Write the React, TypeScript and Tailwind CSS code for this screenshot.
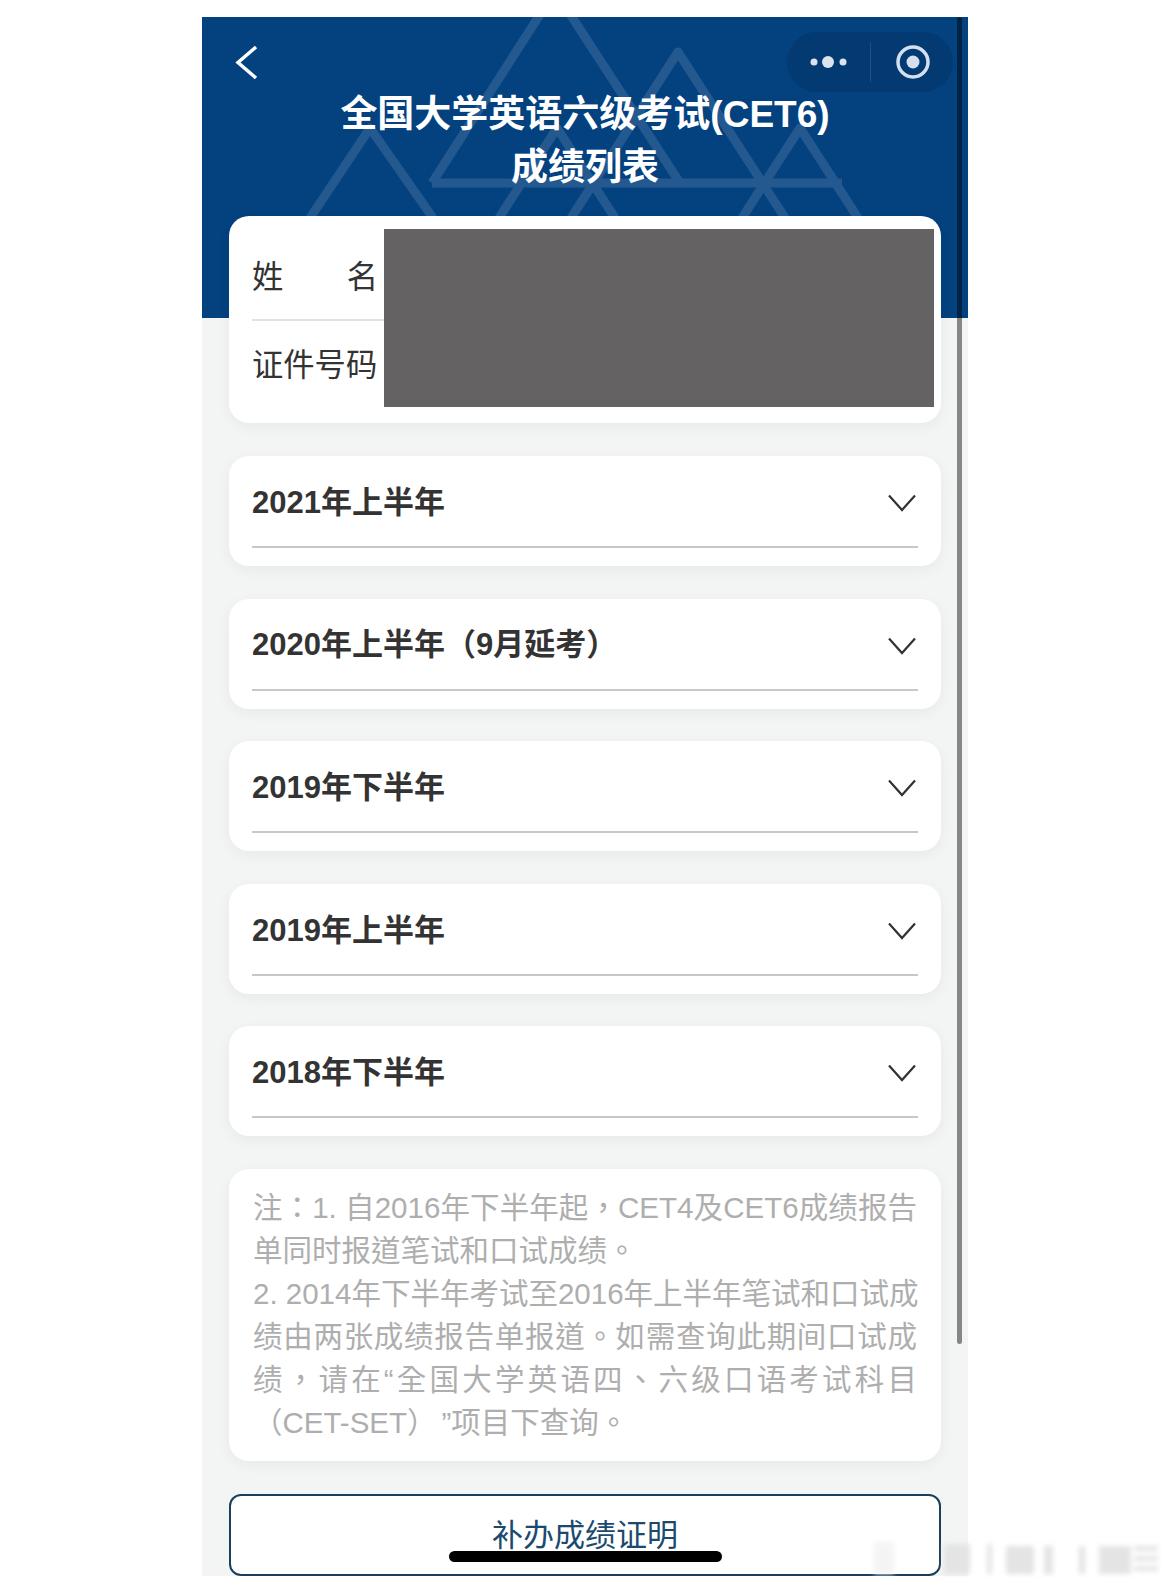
const cjk = "font-['Liberation_Sans','Noto_Sans_CJK_SC',sans-serif]";

const terms = [
  "2021年上半年",
  "2020年上半年（9月延考）",
  "2019年下半年",
  "2019年上半年",
  "2018年下半年",
];

const noteLines = [
  { text: "注：1. 自2016年下半年起，CET4及CET6成绩报告", fill: true },
  { text: "单同时报道笔试和口试成绩。", fill: false },
  { text: "2. 2014年下半年考试至2016年上半年笔试和口试成", fill: true },
  { text: "绩由两张成绩报告单报道。如需查询此期间口试成", fill: true },
  { text: "绩，请在“全国大学英语四、六级口语考试科目", fill: true },
  { text: "（CET-SET）\u2006”项目下查询。", fill: false },
];

const Triangles = () => (
  <svg className="absolute left-0 top-0 opacity-[0.125]" width="766" height="301" fill="none" stroke="#ffffff" strokeWidth="9" strokeLinejoin="round">
    <path d="M230 166 L353 -26 L478 166" />
    <path d="M230 166 H640" />
    <path d="M369 201 L476 35 L583 201" />
    <path d="M540 201 L598 111 L656 201" />
    <path d="M297 201 L355 111 L413 201" />
    <path d="M108 201 L168 111 L231 201" />
  </svg>
);

const Chevron = () => (
  <svg width="30" height="18" viewBox="0 0 30 18" fill="none" stroke="#333333" strokeWidth="2.2">
    <path d="M2 1.5 L15 16 L28 1.5" />
  </svg>
);

// blurred site stamp in the bottom right corner of the photo
const CornerStamp = () => (
  <svg className="absolute left-[860px] top-[1510px]" width="310" height="78" fill="#e4e4e4">
    <defs>
      <filter id="soft">
        <feGaussianBlur stdDeviation="2.5" />
      </filter>
    </defs>
    <g filter="url(#soft)">
      <rect x="14" y="32" width="20" height="32" fill="#f4f4f4" />
      <rect x="84" y="34" width="26" height="30" />
      <rect x="127" y="34" width="5" height="30" />
      <rect x="146" y="36" width="28" height="28" />
      <rect x="184" y="36" width="9" height="28" />
      <rect x="219" y="36" width="6" height="28" />
      <rect x="239" y="36" width="32" height="28" />
      <rect x="274" y="36" width="24" height="5" />
      <rect x="274" y="46" width="24" height="5" />
      <rect x="274" y="56" width="24" height="5" />
    </g>
  </svg>
);

export default function App() {
  return (
    <div className={`relative h-[1588px] overflow-hidden bg-white pl-[202px] pt-[17px] ${cjk}`}>
      <div className="relative h-[1559px] w-[766px] overflow-hidden bg-[#f3f4f4]">
        <div className="relative h-[301px] overflow-hidden bg-[#03417f] pl-[33px] pr-[15px] pt-[15px]">
          <Triangles />
          <div className="relative flex h-[60px] items-center justify-between">
            <svg width="24" height="35" viewBox="0 0 24 35" fill="none" stroke="#ffffff" strokeWidth="3.5">
              <path d="M21 2 L3 17.5 L21 33" />
            </svg>
            <div className="flex h-[60px] w-[166px] items-center rounded-full bg-[#033a72]">
              <svg className="ml-[22px]" width="38" height="14" viewBox="0 0 38 14" fill="#dbe3ee">
                <circle cx="5" cy="7" r="3.5" />
                <circle cx="19" cy="7" r="6" />
                <circle cx="34" cy="7" r="3.5" />
              </svg>
              <div className="ml-[23px] h-[40px] w-px bg-[#1b5088]" />
              <svg className="ml-[24px]" width="36" height="36" viewBox="0 0 36 36" fill="none">
                <circle cx="18" cy="18" r="15" stroke="#d5dfef" strokeWidth="3.5" />
                <circle cx="18" cy="18" r="6.5" fill="#d5dfef" />
              </svg>
            </div>
          </div>
          <h1 className="relative -ml-[33px] -mr-[15px] -mt-[4px] text-center text-[37px] font-bold leading-[53px] text-white">
            全国大学英语六级考试(CET6)
            <br />
            成绩列表
          </h1>
        </div>

        <div className="-mt-[102px] flex flex-col gap-[32.6px] px-[27px]">
          <div className="relative h-[207.4px] rounded-[20px] bg-white px-[23px] text-[31.3px] text-[#333333] shadow-[0_4px_14px_rgba(0,0,0,0.05)]">
            <div className="flex h-[105px] items-center justify-between border-b-2 border-[#e2e2e2] pt-[22px]">
              <span>姓</span>
              <span className="mr-[540px]">名</span>
            </div>
            <div className="flex h-[90px] items-center">证件号码</div>
            <div className="absolute left-[155px] top-[13px] h-[178px] w-[550px] bg-[#656263]" />
          </div>

          {terms.map((term) => (
            <div key={term} className="h-[110px] rounded-[20px] bg-white px-[23px] shadow-[0_4px_14px_rgba(0,0,0,0.05)]">
              <div className="flex h-[92px] items-center justify-between border-b-2 border-[#c8c8c8] pr-[1px] pt-[4px]">
                <span className="text-[31px] font-bold text-[#333333]">{term}</span>
                <Chevron />
              </div>
            </div>
          ))}

          <div className="h-[292px] rounded-[20px] bg-white px-[24px] pt-[17px] font-['Liberation_Sans','Noto_Sans_CJK_TC',sans-serif] text-[29.5px] leading-[43px] text-[#aeaeae] shadow-[0_4px_14px_rgba(0,0,0,0.05)]">
            {noteLines.map((line) => (
              <div key={line.text} className={line.fill ? "whitespace-nowrap text-justify [text-align-last:justify]" : "whitespace-nowrap"}>
                {line.text}
              </div>
            ))}
          </div>

          <button className={`flex h-[82px] items-center justify-center rounded-[12px] border-2 border-[#1a3f5c] bg-white pt-[3px] text-[31px] text-[#1c4a6e] ${cjk}`}>
            补办成绩证明
          </button>
        </div>

        <div className="absolute right-[6px] top-0 h-[1327px] w-[5px] rounded-full bg-black/45" />
        <div className="absolute bottom-[14px] left-[247px] h-[11px] w-[273px] rounded-full bg-black" />
      </div>
      <CornerStamp />
    </div>
  );
}
